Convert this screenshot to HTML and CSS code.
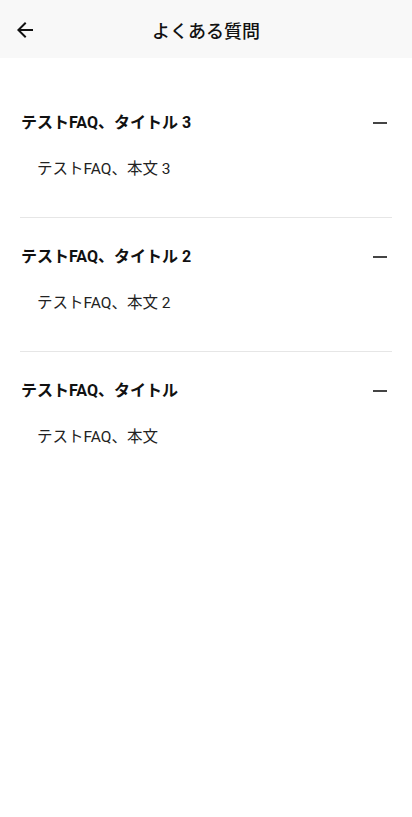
FILE: index.html
```html
<!DOCTYPE html>
<html lang="ja">
<head>
<meta charset="utf-8">
<meta name="viewport" content="width=device-width, initial-scale=1">
<title>よくある質問</title>
<link rel="stylesheet" href="styles.css">
</head>
<body>
<header class="appbar">
  <button class="back" aria-label="戻る">
    <svg width="24" height="24" viewBox="0 0 24 24"><path d="M20 11H7.83l5.59-5.59L12 4l-8 8 8 8 1.41-1.41L7.83 13H20v-2z" fill="#111"/></svg>
  </button>
  <h1 class="title">よくある質問</h1>
</header>
<main class="faq">
  <section class="item">
    <div class="q">
      <span class="q-text">テストFAQ、タイトル 3</span>
      <span class="toggle"><span class="minus"></span></span>
    </div>
    <p class="a">テストFAQ、本文 3</p>
  </section>
  <section class="item">
    <div class="q">
      <span class="q-text">テストFAQ、タイトル 2</span>
      <span class="toggle"><span class="minus"></span></span>
    </div>
    <p class="a">テストFAQ、本文 2</p>
  </section>
  <section class="item last">
    <div class="q">
      <span class="q-text">テストFAQ、タイトル</span>
      <span class="toggle"><span class="minus"></span></span>
    </div>
    <p class="a">テストFAQ、本文</p>
  </section>
</main>
</body>
</html>
```
FILE: styles.css
```css
* { box-sizing: border-box; }
html, body {
  margin: 0;
  padding: 0;
  background: #fff;
  font-family: Roboto, "Noto Sans CJK JP", sans-serif;
  color: #111;
}
.appbar {
  height: 58px;
  background: #f8f8f8;
  display: flex;
  align-items: center;
  justify-content: center;
  position: relative;
}
.back {
  position: absolute;
  left: 13px;
  top: 18px;
  width: 24px;
  height: 24px;
  padding: 0;
  border: 0;
  background: none;
  display: flex;
}
.title {
  margin: 0;
  font-size: 18px;
  font-weight: 500;
  line-height: 24px;
  padding-top: 5px;
}
.faq {
  margin: 26px 20px 0;
}
.item {
  padding: 27px 0 37px;
  border-bottom: 1px solid #e6e6e6;
}
.item.last { border-bottom: 0; }
.q {
  display: flex;
  align-items: center;
  justify-content: space-between;
  height: 24px;
}
.q-text {
  font-size: 16px;
  font-weight: 700;
  line-height: 24px;
  padding-left: 1px;
}
.toggle {
  width: 24px;
  height: 24px;
  display: flex;
  align-items: center;
  justify-content: center;
}
.minus {
  width: 14px;
  height: 2px;
  background: #444;
}
.a {
  margin: 23px 0 0;
  padding-left: 17px;
  font-size: 15.5px;
  line-height: 22px;
  color: #222;
}
```
